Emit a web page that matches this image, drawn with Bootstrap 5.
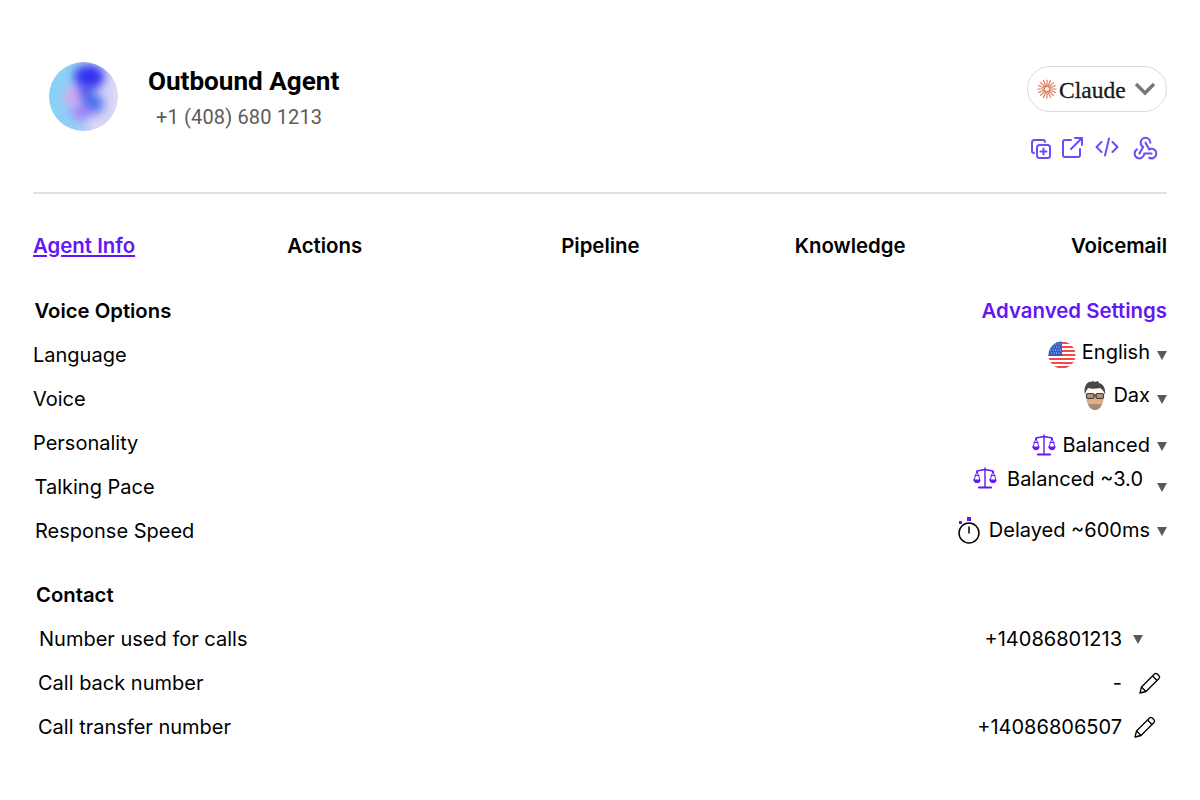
<!DOCTYPE html>
<html lang="en">
<head>
    <meta charset="UTF-8">
    <meta name="viewport" content="width=device-width, initial-scale=1.0">
    <title>Outbound Agent</title>
    <link href="https://cdn.jsdelivr.net/npm/bootstrap@5.3.0/dist/css/bootstrap.min.css" rel="stylesheet">
    <style>
        body {
            font-family: Inter, "Liberation Sans", sans-serif;
            font-size: 20px;
            color: #000;
            background: #fff;
        }
        .page-wrap { padding: 0 33px; }
        .agent-head { padding: 62px 0 34px; border-bottom: 2px solid #e0e0e0; }
        .agent-orb {
            width: 69px;
            height: 69px;
            margin-left: 16px;
            margin-right: 30px;
            flex-shrink: 0;
        }
        .agent-title { font-family: Roboto, sans-serif; font-weight: 700; font-size: 26.1px; line-height: 38px; }
        .agent-phone { font-family: Roboto, sans-serif; font-size: 20px; line-height: 34px; color: #5c5c5c; padding-left: 8px; letter-spacing: .15px; }
        .model-pill {
            width: 140px;
            height: 46px;
            margin-top: 4px;
            padding: 0 10px 0 9px;
            border: 1px solid #d9d9d9;
            border-radius: 23px;
            background: #fff;
        }
        .model-name { font-family: "Liberation Serif", serif; font-size: 23.5px; line-height: 30px; padding-top: 2px; color: #191919; margin-left: 2px; -webkit-text-stroke: .3px #191919; }
        .action-icons { margin-top: 24px; margin-right: 7px; height: 22px; color: #6a4df5; }
        .ico-ext { margin-left: 11px; }
        .ico-code { margin-left: 12px; }
        .ico-hook { margin-left: 12px; }
        .ico-copy { margin-top: 4px; }
        .tab-row { margin-top: 37px; height: 30px; line-height: 30px; font-weight: 600; font-size: 20.4px; }
        .tab-row a { color: #000; text-decoration: none; }
        .tab-row a.on { color: #6417f5; text-decoration: underline; }
        .tab-2 { margin-left: 152px; }
        .tab-3 { margin-left: 199px; }
        .tab-4 { margin-left: 155px; }
        .tab-5 { margin-left: auto; }
        .rows-voice { margin-top: 28px; }
        .rows-contact { margin-top: 20px; }
        .set-row { height: 44px; }
        .set-title { font-weight: 600; font-size: 20.3px; }
        .purple-link { color: #6417f5; font-weight: 600; font-size: 20.4px; text-decoration: none; }
        .pl-1px { padding-left: 1.5px; }
        .pl-2px { padding-left: 2px; }
        .pl-3px { padding-left: 3px; }
        .pl-5px { padding-left: 5px; }
        .pl-6px { padding-left: 6px; }
        .up-1 { padding-bottom: 2px; }
        .up-3 { padding-bottom: 6px; }
        .up-4 { padding-bottom: 8px; }
        .down-2 { padding-top: 4px; }
        .up-8 { padding-bottom: 16px; }
        .scale-low { margin-top: 3px; }
        .scale-high { margin-bottom: 18px; margin-right: 4px; }
        .timer-gap { margin-right: 2px; }
        .caret-down {
            display: inline-block;
            width: 0;
            height: 0;
            margin-left: 1px;
            border-left: 5.5px solid transparent;
            border-right: 5.5px solid transparent;
            border-top: 9px solid #595959;
        }
        .caret-mid { margin-top: 6px; }
        .caret-low { margin-left: 8px; }
        .caret-gap { margin-left: 11px; margin-right: 24px; }
        .val-gap { gap: 6px; }
        .pen-one { margin-left: 16px; margin-right: 5px; }
        .pen-two { margin-left: 11px; margin-right: 10px; }
    </style>
</head>
<body>
    <div class="page-wrap">
        <div class="agent-head d-flex justify-content-between align-items-start">
            <div class="d-flex align-items-start">
                <svg class="agent-orb" viewBox="0 0 69 69">
                    <defs>
                        <clipPath id="orbClip"><circle cx="34.500" cy="34.500" r="34.500"/></clipPath>
                        <filter id="orbBlur" x="-30%" y="-30%" width="160%" height="160%"><feGaussianBlur stdDeviation="5"/></filter>
                        <linearGradient id="orbBase" x1="0" y1="0" x2="1" y2="0">
                            <stop offset="0" stop-color="#86d2f6"/>
                            <stop offset=".35" stop-color="#93cdf8"/>
                            <stop offset=".7" stop-color="#c8c6f5"/>
                            <stop offset="1" stop-color="#dedcf7"/>
                        </linearGradient>
                    </defs>
                    <g clip-path="url(#orbClip)">
                        <rect width="69" height="69" fill="url(#orbBase)"/>
                        <g filter="url(#orbBlur)">
                            <ellipse cx="40" cy="15" rx="15" ry="12" fill="#2f30ee"/>
                            <ellipse cx="36" cy="30" rx="9" ry="8" fill="#5f5cee"/>
                            <ellipse cx="23" cy="35" rx="7" ry="10" fill="#dca6f2"/>
                            <ellipse cx="43" cy="42" rx="11" ry="10" fill="#4a70ec"/>
                            <ellipse cx="33" cy="51" rx="11" ry="7" fill="#a283f3"/>
                            <ellipse cx="48" cy="63" rx="10" ry="6" fill="#dedcf7"/>
                        </g>
                    </g>
                </svg>
                <div>
                    <div class="agent-title">Outbound Agent</div>
                    <div class="agent-phone">+1 (408) 680 1213</div>
                </div>
            </div>
            <div class="d-flex flex-column align-items-end">
                <div class="model-pill d-flex align-items-center">
                    <svg width="20" height="20" viewBox="0 0 20 20" stroke="#dd7a58" stroke-width="1.200" stroke-linecap="round">
                        <path d="M10 1v6.500M10 12.500V19M1 10h6.500M12.500 10H19M3.600 3.600l4.600 4.600M11.800 11.800l4.600 4.600M16.400 3.600l-4.600 4.600M8.200 11.800l-4.600 4.600M6.500 1.600l2.500 6M11 12.400l2.500 6M13.500 1.600l-2.500 6M9 12.400l-2.500 6M1.600 6.500l6 2.500M12.400 11l6 2.500M18.400 6.500l-6 2.500M7.600 11l-6 2.500"/>
                    </svg>
                    <span class="model-name">Claude</span>
                    <svg class="ms-auto" width="22" height="14" viewBox="0 0 22 14" fill="none" stroke="#777" stroke-width="3.400">
                        <path d="M2 2l9 9 9-9"/>
                    </svg>
                </div>
                <div class="action-icons d-flex align-items-center">
                    <svg class="ico-copy" width="20" height="20" viewBox="0 0 20 20" fill="none" stroke="currentColor" stroke-width="2" stroke-linecap="round" stroke-linejoin="round">
                        <rect x="6" y="6" width="13" height="13" rx="2.500"/>
                        <path d="M12.500 9.500v6M9.500 12.500h6M3 14c-1 0-2-.8-2-2V3.500C1 2 2 1 3.500 1H12c1.200 0 2 .8 2 2"/>
                    </svg>
                    <svg class="ico-ext" width="21" height="21" viewBox="0 0 21 21" fill="none" stroke="currentColor" stroke-width="2" stroke-linecap="round" stroke-linejoin="round">
                        <path d="M9 3H3a2 2 0 0 0-2 2v13a2 2 0 0 0 2 2h13a2 2 0 0 0 2-2v-6"/>
                        <path d="M9 12L20 1M13 1h7v7"/>
                    </svg>
                    <svg class="ico-code" width="24" height="20" viewBox="0 0 24 20" fill="none" stroke="currentColor" stroke-width="2" stroke-linecap="round" stroke-linejoin="round">
                        <path d="M6.500 5L1.500 10l5 5M17.500 5l5 5-5 5M14 1.500l-4 17"/>
                    </svg>
                    <svg class="ico-hook" width="29" height="29" viewBox="0 0 24 24" fill="none" stroke="currentColor" stroke-width="1.700" stroke-linecap="round" stroke-linejoin="round">
                        <path d="M4.876 13.610a4 4 0 1 0 6.124 3.390h6"/>
                        <path d="M15.066 20.502a4 4 0 1 0 1.934-7.502c-.706 0-1.424.179-2 .5l-3-5.500"/>
                        <path d="M16 8a4 4 0 1 0-8 0c0 1.506.77 2.818 2 3.500l-3 5.500"/>
                    </svg>
                </div>
            </div>
        </div>

        <div class="tab-row d-flex">
            <a class="on" href="#">Agent Info</a>
            <a class="tab-2" href="#">Actions</a>
            <a class="tab-3" href="#">Pipeline</a>
            <a class="tab-4" href="#">Knowledge</a>
            <a class="tab-5" href="#">Voicemail</a>
        </div>

        <div class="rows-voice">
            <div class="set-row d-flex justify-content-between align-items-center">
                <div class="set-title pl-1px">Voice Options</div>
                <a class="purple-link" href="#">Advanved Settings</a>
            </div>
            <div class="set-row d-flex justify-content-between align-items-center">
                <div>Language</div>
                <div class="d-flex align-items-center val-gap">
                    <svg width="28" height="28" viewBox="0 0 28 28">
                        <defs><clipPath id="flagClip"><circle cx="14" cy="14" r="13.500"/></clipPath></defs>
                        <g clip-path="url(#flagClip)">
                            <rect width="28" height="28" fill="#fff"/>
                            <path d="M0 2h28M0 6h28M0 10h28M0 14h28M0 18h28M0 22h28M0 26h28" stroke="#ef4b4b" stroke-width="2"/>
                            <rect width="14" height="15" fill="#2f5fc4"/>
                            <path d="M2 3h11M3 6h10M2 9h11M3 12h10" stroke="#bcd0f2" stroke-width="1" stroke-dasharray="1 1.500"/>
                        </g>
                    </svg>
                    <span class="up-3">English</span>
                    <span class="caret-down"></span>
                </div>
            </div>
            <div class="set-row d-flex justify-content-between align-items-center">
                <div>Voice</div>
                <div class="d-flex align-items-center val-gap">
                    <svg class="up-3" width="24" height="38" viewBox="0 0 24 32">
                        <path d="M3 14c0 10 4 16 9 16s9-6 9-16z" fill="#dfae86"/>
                        <path d="M2 15C0 6 5 1 8 2l2-1 2 1 3-1 1 2c4 1 7 5 6 12-1-4-3-6-5-7-4 1-9 1-12 0-1 2-3 4-3 7z" fill="#4b4745"/>
                        <path d="M5 23c1 5 4 7 7 7s6-2 7-7c-2 2-3 1-7 1s-5 1-7-1z" fill="#a38a76"/>
                        <rect x="3.500" y="13.500" width="7.500" height="5" rx="1.500" fill="#b98e70" stroke="#3f3b39" stroke-width="1.200"/>
                        <rect x="13" y="13.500" width="7.500" height="5" rx="1.500" fill="#b98e70" stroke="#3f3b39" stroke-width="1.200"/>
                        <path d="M11 15h2" stroke="#3f3b39" stroke-width="1.200"/>
                    </svg>
                    <span class="up-4">Dax</span>
                    <span class="caret-down"></span>
                </div>
            </div>
            <div class="set-row d-flex justify-content-between align-items-center">
                <div>Personality</div>
                <div class="d-flex align-items-center val-gap">
                    <svg class="scale-low" width="24" height="22" viewBox="0 0 24 22" fill="none" stroke="#6417f5" stroke-width="1" stroke-linecap="round" stroke-linejoin="round">
                        <path d="M6 20.500h12" stroke-width="2.200"/>
                        <path d="M4 4l8-1.500L20 4M12 1v19" stroke-width="1.400"/>
                        <path d="M7 13L4 4l-3 9M23 13L20 4l-3 9M2 8.500h4M18 8.500h4"/>
                        <path d="M1 13h6a3 2.800 0 0 1-6 0zM17 13h6a3 2.800 0 0 1-6 0z" fill="#6417f5"/>
                    </svg>
                    <span class="down-2">Balanced</span>
                    <span class="caret-down caret-mid"></span>
                </div>
            </div>
            <div class="set-row d-flex justify-content-between align-items-center">
                <div class="pl-1px">Talking Pace</div>
                <div class="d-flex align-items-center val-gap">
                    <svg class="scale-high" width="24" height="22" viewBox="0 0 24 22" fill="none" stroke="#6417f5" stroke-width="1" stroke-linecap="round" stroke-linejoin="round">
                        <path d="M6 20.500h12" stroke-width="2.200"/>
                        <path d="M4 4l8-1.500L20 4M12 1v19" stroke-width="1.400"/>
                        <path d="M7 13L4 4l-3 9M23 13L20 4l-3 9M2 8.500h4M18 8.500h4"/>
                        <path d="M1 13h6a3 2.800 0 0 1-6 0zM17 13h6a3 2.800 0 0 1-6 0z" fill="#6417f5"/>
                    </svg>
                    <span class="up-8">Balanced ~3.0</span>
                    <span class="caret-down caret-low"></span>
                </div>
            </div>
            <div class="set-row d-flex justify-content-between align-items-center">
                <div class="pl-2px">Response Speed</div>
                <div class="d-flex align-items-center val-gap">
                    <svg class="timer-gap" width="24" height="30" viewBox="0 0 24 30" fill="none" stroke="#000" stroke-width="1.500" stroke-linecap="round">
                        <circle cx="12" cy="17" r="10"/>
                        <path d="M12 11v6"/>
                        <rect x="10" y="1" width="4" height="4" fill="#6417f5" stroke="none"/>
                        <rect x="2" y="5" width="3" height="3" fill="#6417f5" stroke="none"/>
                    </svg>
                    <span class="up-1">Delayed ~600ms</span>
                    <span class="caret-down"></span>
                </div>
            </div>
        </div>

        <div class="rows-contact">
            <div class="set-row d-flex align-items-center">
                <div class="set-title pl-3px">Contact</div>
            </div>
            <div class="set-row d-flex justify-content-between align-items-center">
                <div class="pl-6px">Number used for calls</div>
                <div class="d-flex align-items-center">
                    <span>+14086801213</span>
                    <span class="caret-down caret-gap"></span>
                </div>
            </div>
            <div class="set-row d-flex justify-content-between align-items-center">
                <div class="pl-5px">Call back number</div>
                <div class="d-flex align-items-center">
                    <span>-</span>
                    <svg class="pen-one" width="24" height="24" viewBox="0 0 24 24" fill="none" stroke="#000" stroke-width="1.300" stroke-linejoin="round">
                        <path d="M2 22l1.500-6L16.500 3a2 2 0 0 1 2.800 0l1.700 1.700a2 2 0 0 1 0 2.800L8 20.500z"/>
                        <path d="M14.500 5l4.500 4.500M3.500 16L8 20.500"/>
                    </svg>
                </div>
            </div>
            <div class="set-row d-flex justify-content-between align-items-center">
                <div class="pl-5px">Call transfer number</div>
                <div class="d-flex align-items-center">
                    <span>+14086806507</span>
                    <svg class="pen-two" width="24" height="24" viewBox="0 0 24 24" fill="none" stroke="#000" stroke-width="1.300" stroke-linejoin="round">
                        <path d="M2 22l1.500-6L16.500 3a2 2 0 0 1 2.800 0l1.700 1.700a2 2 0 0 1 0 2.800L8 20.500z"/>
                        <path d="M14.500 5l4.500 4.500M3.500 16L8 20.500"/>
                    </svg>
                </div>
            </div>
        </div>
    </div>
    <script src="https://cdn.jsdelivr.net/npm/bootstrap@5.3.0/dist/js/bootstrap.bundle.min.js"></script>
</body>
</html>
